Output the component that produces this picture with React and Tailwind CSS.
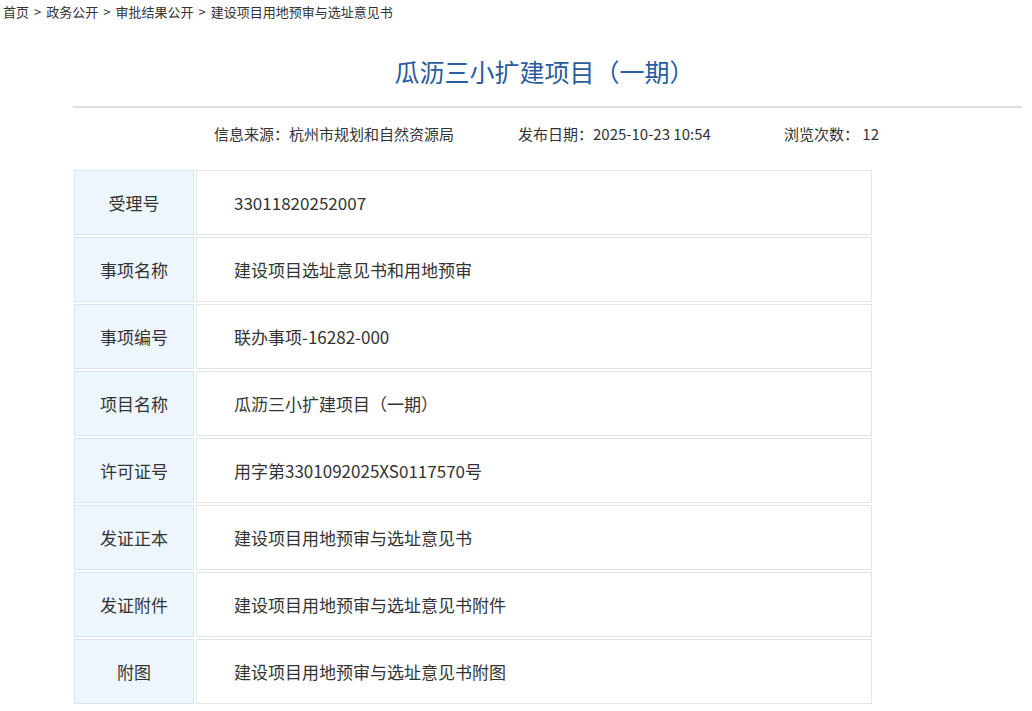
const rows = [
  ["受理号", "33011820252007"],
  ["事项名称", "建设项目选址意见书和用地预审"],
  ["事项编号", "联办事项-16282-000"],
  ["项目名称", "瓜沥三小扩建项目（一期）"],
  ["许可证号", "用字第3301092025XS0117570号"],
  ["发证正本", "建设项目用地预审与选址意见书"],
  ["发证附件", "建设项目用地预审与选址意见书附件"],
  ["附图", "建设项目用地预审与选址意见书附图"],
];

const crumbs = ["首页", "政务公开", "审批结果公开", "建设项目用地预审与选址意见书"];

export default function App() {
  return (
    <div className="min-h-screen bg-white text-[#333] font-['Microsoft_YaHei','Noto_Sans_CJK_SC',sans-serif]">
      {/* breadcrumb */}
      <div className="flex pl-[3px] pt-[3px] text-[13px] leading-[18px] text-[#333]">
        {crumbs.map((c, i) => (
          <span key={c} className="flex">
            {i > 0 && <span className="px-[5px]">&gt;</span>}
            <span>{c}</span>
          </span>
        ))}
      </div>

      <div className="ml-[73px] w-[949px]">
        {/* title */}
        <h1 className="mt-[34px] text-center text-[25px] leading-[32px] text-[#2b5c9e] pr-[6px]">
          瓜沥三小扩建项目（一期）
        </h1>
        <div className="mt-[19px] h-[2px] bg-[#dedede]" />

        {/* meta */}
        <div className="mt-[16px] flex pl-[141px] text-[15px] leading-[20px]">
          <span className="w-[304px]">信息来源：杭州市规划和自然资源局</span>
          <span className="w-[266px]">发布日期：2025-10-23 10:54</span>
          <span>浏览次数：&nbsp;12</span>
        </div>

        {/* detail table */}
        <div className="mt-[26px] ml-[1px] flex w-[798px] flex-col gap-[2px]">
          {rows.map(([label, value]) => (
            <div key={label} className="flex h-[65px] gap-[2px] text-[17px]">
              <div className="flex w-[120px] items-center justify-center border border-[#d5e4f0] bg-[#eef6fd]">
                {label}
              </div>
              <div className="flex flex-1 items-center border border-[#dfe5ea] bg-white pl-[37px]">
                {value}
              </div>
            </div>
          ))}
        </div>
      </div>
    </div>
  );
}
